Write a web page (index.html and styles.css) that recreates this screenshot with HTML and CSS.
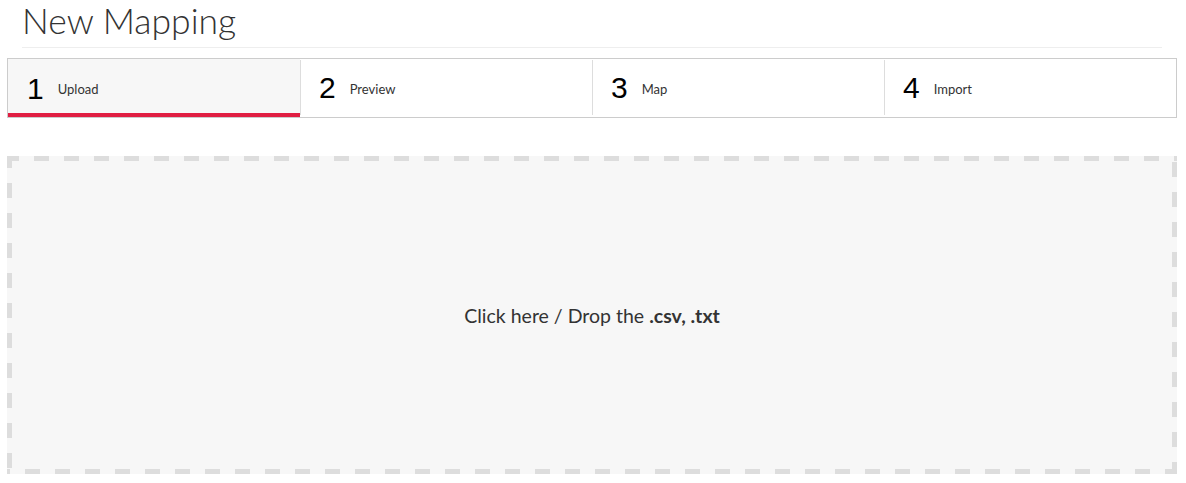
FILE: index.html
```html
<!DOCTYPE html>
<html lang="en">
<head>
    <meta charset="UTF-8">
    <meta name="viewport" content="width=device-width, initial-scale=1.0">
    <title>New Mapping</title>
    <link rel="stylesheet" href="styles.css">
</head>
<body>
    <div class="page">
        <!-- page title -->
        <h1 class="title">New Mapping</h1>

        <!-- wizard steps -->
        <div class="steps">
            <div class="step active">
                <span class="step-num">1</span>
                <span class="step-label">Upload</span>
            </div>
            <div class="step">
                <span class="step-num">2</span>
                <span class="step-label">Preview</span>
            </div>
            <div class="step">
                <span class="step-num">3</span>
                <span class="step-label">Map</span>
            </div>
            <div class="step">
                <span class="step-num">4</span>
                <span class="step-label">Import</span>
            </div>
        </div>

        <!-- drop zone -->
        <div class="dropzone">
            <p>Click here / Drop the <b>.csv, .txt</b></p>
        </div>
    </div>
</body>
</html>
```

FILE: styles.css
```css
body {
    margin: 0;
    font-family: Lato, "Open Sans", sans-serif;
    color: #333;
    background: #fff;
}
.page {
    width: 1170px;
    margin-left: 7px;
}
.title {
    margin: 0 15px;
    font-size: 35.5px;
    font-weight: 300;
    line-height: 42px;
    padding-bottom: 5px;
    border-bottom: 1px solid #eee;
    color: #333;
}
.steps {
    display: flex;
    margin-top: 10px;
    border: 1px solid #ccc;
    height: 58px;
}
.step {
    flex: 1;
    display: flex;
    align-items: center;
    padding-left: 19px;
    box-sizing: border-box;
    position: relative;
}
/* divider between steps, a bit shorter than the box */
.step + .step::before {
    content: "";
    position: absolute;
    left: 0;
    top: 1px;
    bottom: 2px;
    border-left: 1px solid #ddd;
}
.step.active {
    background-color: #f7f7f7;
    border-bottom: 4px solid #e01e42;
    padding-top: 5px;
}
.step-num {
    font-family: "Liberation Sans", Arial, sans-serif;
    font-size: 30px;
    color: #000;
    margin-right: 14px;
}
.step-label {
    font-size: 13px;
    color: #333;
    padding-top: 1px;
}
/* dashed frame drawn with gradients so dashes are 15px long */
.dropzone {
    margin-top: 38px;
    height: 318px;
    background-color: #f7f7f7;
    background-image:
        linear-gradient(to right, #ddd 15px, transparent 15px),
        linear-gradient(to left, #ddd 15px, transparent 15px),
        linear-gradient(to bottom, #ddd 15px, transparent 15px),
        linear-gradient(to top, #ddd 15px, transparent 15px);
    background-size: 30px 5px, 30px 5px, 5px 30px, 5px 30px;
    background-repeat: repeat-x, repeat-x, repeat-y, repeat-y;
    background-position: left -3px top 0, right -3px bottom 0, left 0 top -3px, right 0 bottom -3px;
    display: flex;
    align-items: center;
    justify-content: center;
}
.dropzone p {
    margin: 0;
    font-size: 19.5px;
    color: #333;
}
.dropzone b {
    font-weight: 700;
}
```
